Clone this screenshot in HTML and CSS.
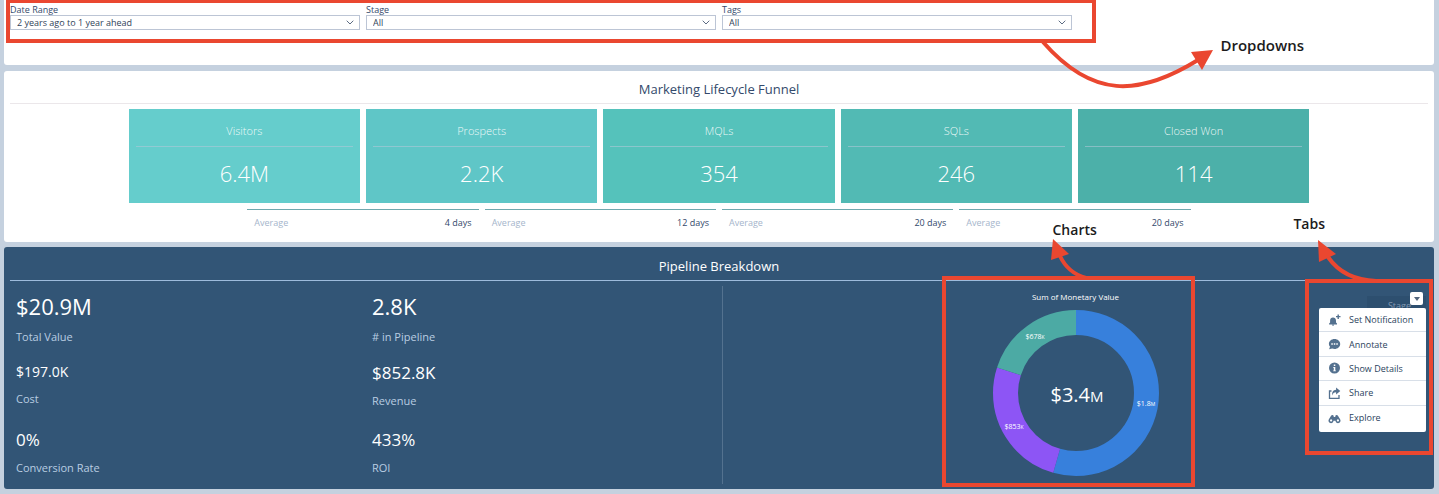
FILE: index.html
```html
<!DOCTYPE html>
<html lang="en">

<head>
    <meta charset="UTF-8">
    <meta name="viewport" content="width=device-width, initial-scale=1.0">
    <title>Marketing Dashboard</title>
    <link rel="stylesheet" href="styles.css">
</head>

<body>
    <!-- filters -->
    <section class="panel filters">
        <div class="grid">
            <div class="field">
                <label for="range">Date Range</label>
                <div class="select-box">
                    <select id="range"><option>2 years ago to 1 year ahead</option></select>
                    <svg class="chevron" viewBox="0 0 8 5"><path d="M.7.7 4 4 7.3.7" /></svg>
                </div>
            </div>
            <div class="field">
                <label for="stage">Stage</label>
                <div class="select-box">
                    <select id="stage"><option>All</option></select>
                    <svg class="chevron" viewBox="0 0 8 5"><path d="M.7.7 4 4 7.3.7" /></svg>
                </div>
            </div>
            <div class="field">
                <label for="tags">Tags</label>
                <div class="select-box">
                    <select id="tags"><option>All</option></select>
                    <svg class="chevron" viewBox="0 0 8 5"><path d="M.7.7 4 4 7.3.7" /></svg>
                </div>
            </div>
        </div>
        <div class="mark mark-dropdowns"></div>
        <svg class="arrow arrow-dropdowns" viewBox="0 0 176 50">
            <path class="line" d="M3 1C52 57 98 56 158 19" />
            <path class="head" d="M173 9 151 11 162 29z" />
        </svg>
        <strong class="note note-dropdowns">Dropdowns</strong>
    </section>

    <!-- funnel -->
    <section class="panel funnel">
        <h2 class="title">Marketing Lifecycle Funnel</h2>
        <div class="grid">
            <div class="tile visitors">
                <h3>Visitors</h3>
                <p>6.4M</p>
            </div>
            <div class="tile prospects">
                <h3>Prospects</h3>
                <p>2.2K</p>
            </div>
            <div class="tile mqls">
                <h3>MQLs</h3>
                <p>354</p>
            </div>
            <div class="tile sqls">
                <h3>SQLs</h3>
                <p>246</p>
            </div>
            <div class="tile won">
                <h3>Closed Won</h3>
                <p>114</p>
            </div>
            <div class="average first"><span>Average</span><b>4 days</b></div>
            <div class="average"><span>Average</span><b>12 days</b></div>
            <div class="average"><span>Average</span><b>20 days</b></div>
            <div class="average"><span>Average</span><b>20 days</b></div>
        </div>
    </section>

    <!-- pipeline -->
    <section class="panel pipeline">
        <h2 class="title">Pipeline Breakdown</h2>
        <div class="grid">
            <div class="metric large">
                <p>$20.9M</p>
                <h3>Total Value</h3>
            </div>
            <div class="metric large">
                <p>2.8K</p>
                <h3># in Pipeline</h3>
            </div>
            <div class="metric small">
                <p>$197.0K</p>
                <h3>Cost</h3>
            </div>
            <div class="metric">
                <p>$852.8K</p>
                <h3>Revenue</h3>
            </div>
            <div class="metric">
                <p>0%</p>
                <h3>Conversion Rate</h3>
            </div>
            <div class="metric">
                <p>433%</p>
                <h3>ROI</h3>
            </div>

            <div class="chart">
                <h3>Sum of Monetary Value</h3>
                <svg class="donut" viewBox="-83 -83 166 166">
                    <g class="ring">
                        <circle class="blue" r="70.5" pathLength="360" />
                        <circle class="purple" r="70.5" pathLength="360" />
                        <circle class="green" r="70.5" pathLength="360" />
                    </g>
                    <text class="value" x="70" y="13">$1.8<tspan>M</tspan></text>
                    <text class="value" x="-62" y="36">$853<tspan>K</tspan></text>
                    <text class="value" x="-41" y="-54">$678<tspan>K</tspan></text>
                    <text class="total" x="1" y="9">$3.4<tspan>M</tspan></text>
                </svg>
                <div class="mark mark-charts"></div>
                <svg class="arrow arrow-charts" viewBox="0 0 44 42">
                    <path class="line" d="M12 17Q20 34 38 39" />
                    <path class="head" d="M5 0 21 15 3 21z" />
                </svg>
                <strong class="note note-charts">Charts</strong>
            </div>
        </div>

        <div class="widget">
            <div class="widget-name">Stage</div>
            <button class="toggle" type="button" aria-label="Open menu"><svg viewBox="0 0 6 4"><path d="M0 0h6L3 4z" /></svg></button>
            <div class="menu">
                <button type="button">
                    <svg viewBox="0 0 12 12"><path d="M.6 10.400V9.500l1-1V6.800C1.600 4.800 2.800 3.600 4.500 3.600s3 1.200 3 3.200v1.700l1 1v.9zM3.500 10.800h2.100a1 1 0 0 1-2.100 0zM9 .4h1.400v1.500H12v1.400h-1.600v1.600H9V3.300H7.500V1.900H9z" /></svg>
                    Set Notification
                </button>
                <button type="button">
                    <svg viewBox="0 0 12 12"><path d="M6 1c3.200 0 5.700 2.200 5.700 5S9.200 11 6 11c-.9 0-1.700-.2-2.400-.5L.6 11.300l.9-2.500C.8 8 .4 7 .4 6 .4 3.200 2.800 1 6 1z" /><path class="cut" d="M2.800 5.300h1.500v1.400H2.800zM5.300 5.300h1.500v1.400H5.300zM7.800 5.300h1.500v1.400H7.800z" /></svg>
                    Annotate
                </button>
                <button type="button">
                    <svg viewBox="0 0 12 12"><circle cx="6" cy="6" r="5.500" /><path class="cut" d="M5.300 2.600h1.500V4H5.300zM4.800 5h2v3.400h.6v.9H4.700v-.9h.6V5.900h-.5z" /></svg>
                    Show Details
                </button>
                <button type="button">
                    <svg viewBox="0 0 12 12"><path class="outline" d="M3 4H1v7.300h9.500V8" /><path d="M7.600.6 11.800 4 7.600 7.400V5.200C5.400 5.200 4.300 6.200 4 8.600c-1-3.500.7-5.700 3.600-5.900z" /></svg>
                    Share
                </button>
                <button type="button">
                    <svg viewBox="0 0 12 12"><path d="M2.400 4C3 2.600 4.900 2.600 5.200 4v.9h1.600V4C7.100 2.600 9 2.600 9.600 4l2 3.300A2.500 2.500 0 1 1 7 8.700H5A2.500 2.500 0 1 1 .4 7.300z" /><path class="cut" d="M2.600 7.300a1.100 1.100 0 1 0 .01 0zM9.400 7.300a1.100 1.100 0 1 0 .01 0z" /></svg>
                    Explore
                </button>
            </div>
        </div>
        <div class="mark mark-tabs"></div>
        <svg class="arrow arrow-tabs" viewBox="0 0 64 44">
            <path class="line" d="M12 17Q28 40 60 41" />
            <path class="head" d="M2 0 20 14 3 22z" />
        </svg>
        <strong class="note note-tabs">Tabs</strong>
    </section>
</body>

</html>
```
FILE: styles.css
```css
:root {
    --page: #c5d1df;
    --navy: #325576;
    --text: #33496b;
    --icon: #54718f;
    --red: #ea4730;
}

* {
    box-sizing: border-box;
    margin: 0;
    padding: 0;
}

body {
    padding: 0 5px 5px 4px;
    background: var(--page);
    color: var(--text);
    font-family: "Open Sans", "Noto Sans", sans-serif;
    font-size: 9px;
}

h2,
h3,
b {
    font-weight: 400;
}

/* every panel shares the same twelve columns */
.panel {
    position: relative;
    padding: 0 6px;
    border-radius: 3px;
    background: #fff;
}

.grid {
    display: grid;
    grid-template-columns: repeat(12, 1fr);
    gap: 6px;
}

.title {
    padding-top: 4px;
    border-bottom: 1px solid #ebe7ea;
    font-size: 13px;
    line-height: 28px;
    text-align: center;
}

/* filters */
.filters {
    z-index: 1;
    margin-bottom: 6px;
    padding-top: 4px;
    padding-bottom: 35px;
    border-radius: 0 0 3px 3px;
}

.field {
    grid-column: span 3;
}

.field label {
    display: block;
    line-height: 11px;
}

.select-box {
    position: relative;
}

select {
    display: block;
    width: 100%;
    height: 15px;
    padding: 0 20px 0 6px;
    border: 1px solid #bcc5d5;
    border-radius: 0;
    background: #fff;
    color: #2f3f58;
    font: inherit;
    appearance: none;
}

.chevron {
    position: absolute;
    top: 5px;
    right: 6px;
    width: 8px;
    fill: none;
    stroke: #5c6b82;
}

/* funnel */
.funnel {
    margin-bottom: 5px;
    padding-bottom: 6px;
}

.funnel .grid,
.pipeline .grid {
    padding-top: 5px;
}

.tile {
    grid-column: span 2;
    padding: 7px 7px 4px;
    color: #fff;
    text-align: center;
}

.tile h3 {
    border-bottom: 1px solid rgba(175, 200, 215, .6);
    color: rgba(255, 255, 255, .9);
    font-size: 11px;
    font-weight: 300;
    line-height: 30px;
}

.tile p {
    font-size: 22px;
    font-weight: 300;
    line-height: 52px;
}

.visitors {
    grid-column: 2 / span 2;
    background: #65cdcc;
}

.prospects {
    background: #5fc6c7;
}

.mqls {
    background: #55c2bb;
}

.sqls {
    background: #52bab4;
}

.won {
    background: #4cb0a9;
}

.average {
    display: flex;
    justify-content: space-between;
    grid-column: span 2;
    padding: 0 7px;
    border-top: 1px solid #6fa8ae;
    line-height: 26px;
}

.average.first {
    grid-column: 3 / span 2;
}

.average span {
    color: #a5b5cb;
}

/* pipeline */
.pipeline {
    padding-top: 1px;
    padding-bottom: 5px;
    background: var(--navy);
    color: #fff;
}

.pipeline .title {
    border-color: #9dbbdc;
}

.pipeline .grid {
    grid-template-rows: 64px 61px 61px;
}

.metric {
    grid-column: span 3;
    padding-left: 6px;
}

.metric p {
    font-size: 17px;
    line-height: 34px;
}

.metric h3 {
    color: #b9cde2;
    font-size: 11px;
    line-height: 22px;
}

.metric.large p {
    font-size: 22px;
    line-height: 40px;
}

.metric.small p {
    font-size: 14px;
    line-height: 32px;
}

.chart {
    position: relative;
    grid-area: 1 / 7 / span 3 / span 6;
    border-left: 1px solid #54728f;
    text-align: center;
}

.chart h3 {
    font-size: 8px;
    line-height: 22px;
}

.donut {
    display: block;
    width: 166px;
    margin: 2px auto 0;
    overflow: visible;
}

.ring {
    fill: none;
    stroke-width: 25px;
    transform: rotate(-90deg);
}

.blue {
    stroke: #3780dc;
    stroke-dasharray: 196 164;
}

.purple {
    stroke: #8d55f5;
    stroke-dasharray: 92 268;
    stroke-dashoffset: -196;
}

.green {
    stroke: #4caaa4;
    stroke-dasharray: 72 288;
    stroke-dashoffset: -288;
}

.donut text {
    fill: #fff;
    text-anchor: middle;
}

.value {
    font-size: 7px;
}

.value tspan {
    font-size: 5px;
}

.total {
    font-size: 20px;
}

.total tspan {
    font-size: 15px;
}

/* widget menu */
.widget {
    position: absolute;
    top: 45px;
    right: 8px;
    width: 107px;
}

.widget-name {
    height: 12px;
    margin: 4px 0 0 48px;
    padding-right: 15px;
    background: #2d4f6f;
    color: #8198b1;
    line-height: 20px;
    text-align: right;
}

.toggle {
    position: absolute;
    top: 0;
    right: 3px;
    display: flex;
    align-items: center;
    justify-content: center;
    width: 13px;
    height: 13px;
    border: 0;
    border-radius: 2px;
    background: #fff;
}

.toggle svg {
    width: 6px;
    fill: #52657d;
}

.menu {
    position: relative;
    display: grid;
    grid-template-rows: repeat(5, 1fr);
    height: 124px;
    padding-bottom: 2px;
    border-radius: 2px;
    background: #fff;
}

.menu button {
    display: flex;
    align-items: center;
    gap: 8px;
    padding-left: 9px;
    border: 0;
    border-bottom: 1px solid #d8dfe8;
    background: none;
    color: #2b3f5c;
    font: inherit;
    white-space: nowrap;
}

.menu button:last-child {
    border-bottom: 0;
}

.menu svg {
    flex: none;
    width: 13px;
    height: 12px;
    fill: var(--icon);
}

.menu .cut {
    fill: #fff;
}

.menu .outline {
    fill: none;
    stroke: var(--icon);
    stroke-width: 1.3px;
}

/* red callouts */
.mark,
.arrow,
.note {
    position: absolute;
    z-index: 2;
    pointer-events: none;
}

.mark {
    border: 4px solid var(--red);
}

.arrow {
    overflow: visible;
}

.arrow .line {
    fill: none;
    stroke: var(--red);
    stroke-width: 4px;
}

.arrow .head {
    fill: var(--red);
}

.note {
    color: #1c1c1c;
    font-size: 15px;
    font-weight: 600;
    line-height: 20px;
}

.mark-dropdowns {
    top: -1px;
    left: 2px;
    right: calc(25% - 19px);
    height: 44px;
}

.arrow-dropdowns {
    top: 41px;
    right: 218px;
    width: 176px;
}

.note-dropdowns {
    top: 35px;
    right: 130px;
}

.mark-charts {
    top: -10px;
    left: calc(50% - 134px);
    width: 253px;
    height: 211px;
}

.arrow-charts {
    top: -47px;
    left: calc(50% - 28px);
    width: 44px;
}

.note-charts {
    top: -66px;
    left: calc(50% - 23px);
    font-size: 14px;
}

.mark-tabs {
    top: 32px;
    right: 1px;
    width: 128px;
    height: 176px;
}

.arrow-tabs {
    top: -7px;
    right: 54px;
    width: 64px;
}

.note-tabs {
    top: -33px;
    right: 109px;
    font-size: 14px;
}
```
